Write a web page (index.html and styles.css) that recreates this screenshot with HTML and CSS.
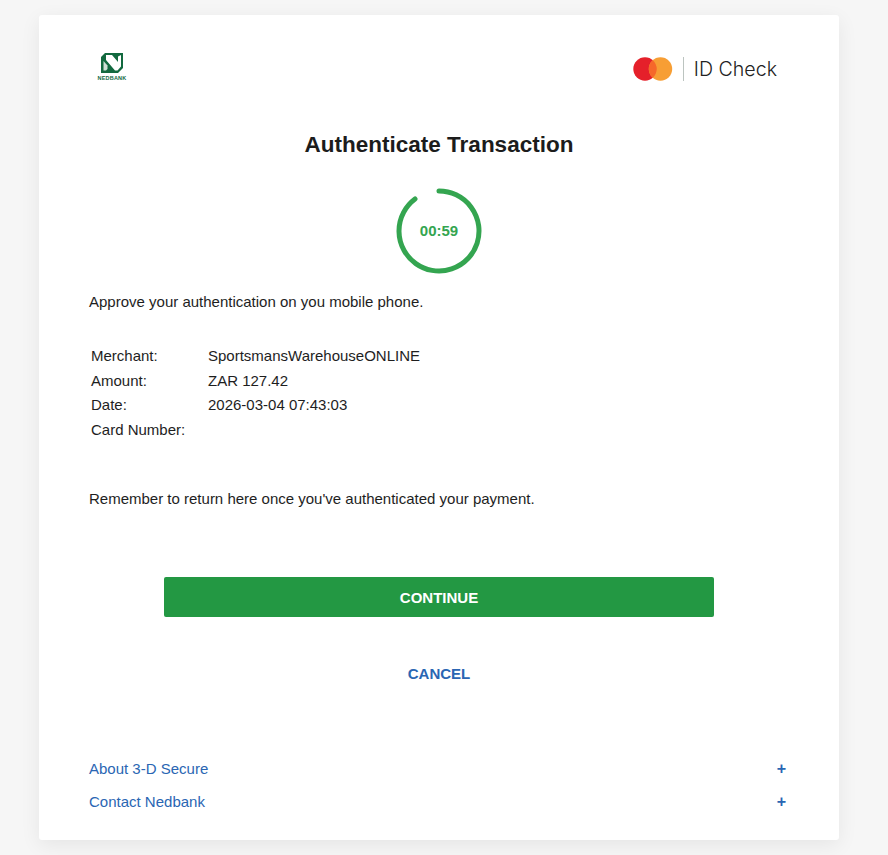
FILE: index.html
```html
<!DOCTYPE html>
<html lang="en">
<head>
	<meta charset="UTF-8">
	<meta name="viewport" content="width=device-width, initial-scale=1.0">
	<title>Authenticate Transaction</title>
	<link rel="stylesheet" href="styles.css">
</head>
<body>
	<div class="card">
		<div class="header">
			<div class="bank-logo">
				<svg width="22" height="20" viewBox="0 0 22 20">
					<path fill="#12693f" d="M4 0H22V15L17 20H0V4Z"/>
					<path fill="#fff" d="M5 2H11L17 9V3.5L20 2V13.5L16.5 17.5H14L5 7Z"/>
					<path fill="#cfe0d6" d="M2.5 8L6.5 12.5V16L5 17.5H2.5Z"/>
				</svg>
				<span class="bank-name">NEDBANK</span>
			</div>
			<div class="scheme-logo">
				<svg width="40" height="24" viewBox="0 0 40 24">
					<circle cx="12" cy="12" r="11.7" fill="#e5202a"/>
					<circle cx="27.5" cy="12" r="11.7" fill="#f79e34"/>
					<path fill="#f6682a" d="M19.75 3.2a11.7 11.7 0 0 1 0 17.6a11.7 11.7 0 0 1 0-17.6Z"/>
				</svg>
				<span class="scheme-divider"></span>
				<span class="scheme-name">ID Check</span>
			</div>
		</div>

		<h1>Authenticate Transaction</h1>

		<div class="timer">
			<svg width="88" height="88" viewBox="0 0 88 88">
				<path class="timer-ring" d="M44 4A40 40 0 1 1 20 12"/>
			</svg>
			<span class="timer-text">00:59</span>
		</div>

		<p class="approve">Approve your authentication on you mobile phone.</p>

		<table class="details">
			<tr><td class="label">Merchant:</td><td>SportsmansWarehouseONLINE</td></tr>
			<tr><td class="label">Amount:</td><td>ZAR 127.42</td></tr>
			<tr><td class="label">Date:</td><td>2026-03-04 07:43:03</td></tr>
			<tr><td class="label">Card Number:</td><td></td></tr>
		</table>

		<p class="remember">Remember to return here once you've authenticated your payment.</p>

		<button class="continue">CONTINUE</button>
		<a class="cancel" href="#">CANCEL</a>

		<div class="footer-links">
			<div class="footer-row"><a href="#">About 3-D Secure</a><span class="plus">+</span></div>
			<div class="footer-row"><a href="#">Contact Nedbank</a><span class="plus">+</span></div>
		</div>
	</div>
</body>
</html>
```

FILE: styles.css
```css
html, body {
	height: 100%;
}
body {
	margin: 0;
	background: #f6f6f6;
	color: #1e1e1e;
	font-family: "Liberation Sans", Arial, sans-serif;
	font-size: 15px;
	overflow: hidden;
}
a {
	color: #2a66b3;
	text-decoration: none;
}
.card {
	width: 700px;
	height: 825px;
	margin: 15px auto 0;
	padding: 0 50px;
	background: #fff;
	border-radius: 3px;
	box-shadow: 0 5px 20px rgba(0, 0, 0, 0.07);
	position: relative;
	left: -5px;
}
.header {
	display: flex;
	justify-content: space-between;
	align-items: flex-start;
	height: 115px;
	padding: 38px 12px 0 8px;
	box-sizing: border-box;
}
.bank-logo {
	display: flex;
	flex-direction: column;
	align-items: center;
	width: 30px;
}
.bank-name {
	color: #12693f;
	font-size: 5.5px;
	font-weight: bold;
	line-height: 10px;
	letter-spacing: 0.2px;
}
.scheme-logo {
	display: flex;
	align-items: center;
	height: 24px;
	margin-top: 4px;
}
.scheme-divider {
	width: 1px;
	height: 24px;
	margin: 0 10px;
	background: #bcc4c0;
}
.scheme-name {
	font-family: Inter, sans-serif;
	font-size: 19.6px;
	font-weight: 300;
	color: #222;
}
h1 {
	margin: 0;
	text-align: center;
	font-size: 22.5px;
	line-height: 30px;
	color: #1c1c1c;
}
.timer {
	position: relative;
	width: 88px;
	height: 88px;
	margin: 27px auto 0;
}
.timer svg {
	display: block;
}
.timer-ring {
	fill: none;
	stroke: #34a550;
	stroke-width: 5;
	stroke-linecap: round;
}
.timer-text {
	position: absolute;
	inset: 0 0 2px;
	display: flex;
	align-items: center;
	justify-content: center;
	color: #34a550;
	font-size: 15px;
	font-weight: bold;
}
.approve {
	margin: 17px 0 0;
	line-height: 20px;
}
.details {
	margin-top: 32px;
	border-spacing: 0;
}
.details td {
	padding: 2px;
	line-height: 20.5px;
}
.details .label {
	width: 113px;
}
.remember {
	margin: 47px 0 0;
	line-height: 20px;
}
.continue {
	display: block;
	width: 550px;
	height: 40px;
	margin: 68px auto 0;
	border: 0;
	border-radius: 2px;
	background: #239843;
	color: #fff;
	font-family: inherit;
	font-size: 15px;
	font-weight: bold;
}
.cancel {
	display: block;
	margin-top: 47px;
	text-align: center;
	font-weight: bold;
	line-height: 20px;
}
.footer-links {
	margin-top: 75px;
}
.footer-row {
	display: flex;
	justify-content: space-between;
	height: 33px;
	line-height: 20px;
}
.plus {
	color: #2a66b3;
	font-size: 16px;
	font-weight: bold;
	margin-right: 3px;
}
```
